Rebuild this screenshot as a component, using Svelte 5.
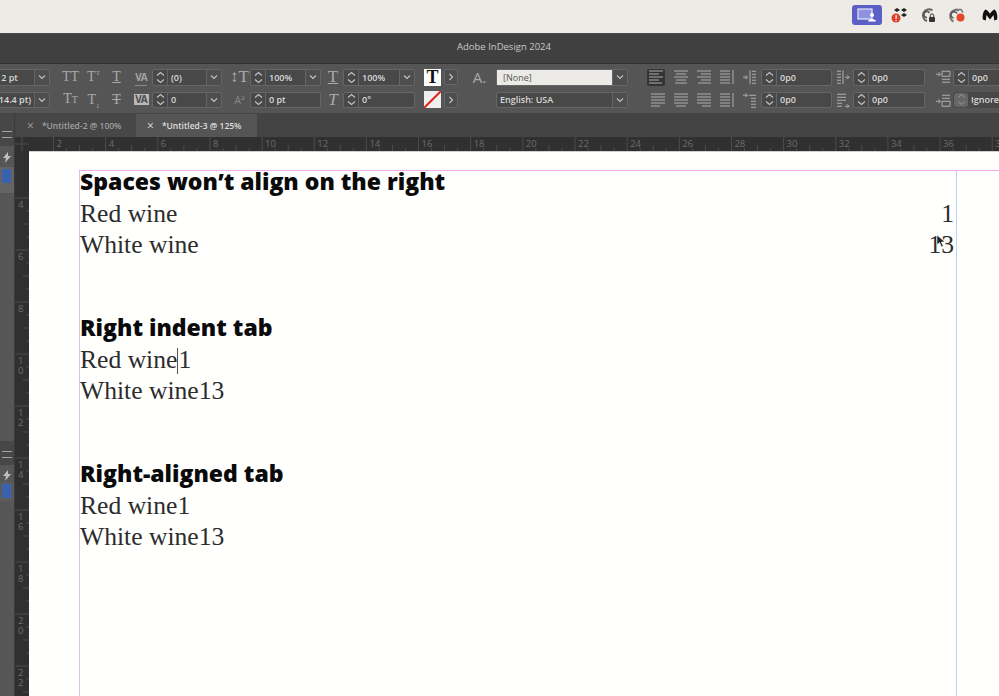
<script>
  const rulerStep = 52.15;
  const hLabels = Array.from({ length: 19 }, (_, i) => ({ n: (i + 1) * 2, x: 53.5 + i * rulerStep - 15 }));
  const vLabels = Array.from({ length: 10 }, (_, i) => ({ n: String((i + 2) * 2), y: 198 - 151 + i * 52 }));
  const minor = [0.25, 0.5, 0.75];

  const groups = [
    { title: 'Spaces won’t align on the right', rows: [['Red wine', '1'], ['White wine', '13']], spaced: true },
    { title: 'Right indent tab', rows: [['Red wine', '1'], ['White wine', '13']], caret: true },
    { title: 'Right-aligned tab', rows: [['Red wine', '1'], ['White wine', '13']] }
  ];

  const aligns = [
    ['M1 2h14M1 5h10M1 8h14M1 11h10M1 14h13', 'M1 2h14M3 5h10M1 8h14M3 11h10M2 14h12', 'M1 2h14M5 5h10M1 8h14M5 11h10M2 14h13', 'M1 2h10M1 5h10M1 8h10M1 11h10M1 14h10M14 1v14'],
    ['M1 2h14M1 5h14M1 8h14M1 11h14M1 14h9', 'M1 2h14M1 5h14M1 8h14M1 11h14M3 14h10', 'M1 2h14M1 5h14M1 8h14M1 11h14M6 14h9', 'M1 2h10M1 5h10M1 8h10M1 11h10M1 14h10M14 1v14']
  ];
</script>

{#snippet combo(text, spin = true, drop = true, light = false)}
  <div class="combo" class:light>
    {#if spin}
      <span class="spin"><svg width="9" height="13" viewBox="0 0 9 13"><path d="M1 4.5 4.5 1.5 8 4.5M1 8.5l3.5 3 3.5-3" /></svg></span>
    {/if}
    <span class="val">{text}</span>
    {#if drop}
      <span class="drop"><svg width="8" height="6" viewBox="0 0 8 6"><path d="M1 1.5 4 4.5 7 1.5" /></svg></span>
    {/if}
  </div>
{/snippet}

{#snippet icon(d, w = 16, h = 16)}
  <svg class="ico" width={w} height={h} viewBox="0 0 {w} {h}"><path {d} /></svg>
{/snippet}

<div class="app">
  <header class="menubar">
    <span class="pill">
      <svg width="20" height="14" viewBox="0 0 20 14">
        <rect x="1" y="1" width="14" height="10" fill="#8f92e0" stroke="#e6e6fa" stroke-width="1.2" />
        <circle cx="15" cy="7" r="2" fill="#fff" />
        <path d="M11 13.500c0-3.500 8-3.500 8 0z" fill="#fff" />
      </svg>
    </span>
    <svg class="tray drop-ic" width="16" height="18" viewBox="0 0 16 18">
      <path d="M6 2 9 4 6 6 3 4zM13 2l3 2-3 2-3-2zM13 7l3 2-3 2-3-2z" fill="#222" />
      <circle cx="5" cy="12" r="4.500" fill="#e0402a" />
      <rect x="4.500" y="9" width="1.200" height="4" fill="#fff" />
      <rect x="4.500" y="14" width="1.200" height="1.200" fill="#fff" />
    </svg>
    <svg class="tray cc" width="14" height="16" viewBox="0 0 14 16">
      <path d="M11.500 3.500A6 6 0 1 0 6 14" fill="none" stroke="#666" stroke-width="2" />
      <path d="M8.500 6A3 3 0 1 0 6 10.500" fill="none" stroke="#555" stroke-width="1.600" />
      <rect x="8" y="10" width="6" height="5" rx="1" fill="#333" />
      <path d="M9.300 10V8.600a1.700 1.700 0 0 1 3.400 0V10" fill="none" stroke="#333" />
    </svg>
    <svg class="tray sync" width="19" height="16" viewBox="0 0 19 16">
      <path d="M12 3.500A6 6 0 1 0 6.500 14.500" fill="none" stroke="#777" stroke-width="2" />
      <path d="M10 6.500A3.200 3.200 0 1 0 6.500 11" fill="none" stroke="#555" stroke-width="1.600" />
      <path d="M8 2.500h6l2 3" fill="none" stroke="#777" stroke-width="1.500" />
      <circle cx="13.500" cy="10.500" r="4" fill="#e5482d" />
    </svg>
    <svg class="tray" width="16" height="15" viewBox="0 0 19 16">
      <path d="M1 14c-.8-5 .5-10 3-12 2 0 4 3 5.500 5C11 5 13 2 15 2c2.500 2 3.800 7 3 12l-3.500 1-.8-6.500L9.500 14 5.300 8.500 4.500 15z" fill="#111" />
    </svg>
  </header>

  <div class="titlebar">Adobe InDesign 2024</div>

  <section class="toolbar">
    <div class="col c1">
      {@render combo('12 pt', false)}
      {@render combo('(14.4 pt)', false)}
    </div>
    <div class="col c2">
      <div class="letters"><span>TT</span><span>T<sup>T</sup></span><span class="under">T</span></div>
      <div class="letters"><span>T<small>T</small></span><span>T<sub>1</sub></span><span class="strike">T</span></div>
    </div>
    <div class="col c3">
      <span class="va"><i>VA</i></span>
      <span class="va boxed"><i>VA</i></span>
    </div>
    <div class="col c4">
      {@render combo('(0)')}
      {@render combo('0')}
    </div>
    <div class="col c5">
      <span class="glyph big">↕T</span>
      <span class="glyph tiny">Aª</span>
    </div>
    <div class="col c6">
      {@render combo('100%')}
      {@render combo('0 pt', true, false)}
    </div>
    <div class="col c7">
      <span class="glyph big under">T</span>
      <span class="glyph big slant">T</span>
    </div>
    <div class="col c8">
      {@render combo('100%')}
      {@render combo('0°', true, false)}
    </div>
    <div class="col c9">
      <div class="swatchrow">
        <span class="swatch">T</span>
        <span class="arrow"><svg width="6" height="8" viewBox="0 0 6 8"><path d="M1.500 1 4.500 4 1.500 7" /></svg></span>
      </div>
      <div class="swatchrow">
        <span class="swatch none"><svg width="17" height="17" viewBox="0 0 17 17"><path d="M0 17 17 0" /></svg></span>
        <span class="arrow"><svg width="6" height="8" viewBox="0 0 6 8"><path d="M1.500 1 4.500 4 1.500 7" /></svg></span>
      </div>
    </div>
    <div class="col c10">
      <span class="glyph style">A.</span>
    </div>
    <div class="col c11">
      {@render combo('[None]', false, true, true)}
      {@render combo('English: USA', false)}
    </div>
    <div class="col c12">
      {#each aligns as row, r}
        <div class="aligns">
          {#each row as d, i}
            <span class="alignbtn" class:on={r === 0 && i === 0}>{@render icon(d)}</span>
          {/each}
        </div>
      {/each}
    </div>
    <div class="col c13">
      {@render icon('M1 8h4M3.500 6 5.500 8 3.500 10M8 1v14M10 2h4M10 5h4M10 8h4M10 11h4M10 14h4')}
      {@render icon('M1 3h4M3.500 1 5.500 3 3.500 5M7 3h7M9 6h5M9 9h5M9 12h5M9 15h5')}
    </div>
    <div class="col c14">
      {@render combo('0p0', true, false)}
      {@render combo('0p0', true, false)}
    </div>
    <div class="col c15">
      {@render icon('M1 2h4M1 5h4M1 8h4M1 11h4M1 14h4M7 1v14M9 8h4M11 6 13 8 11 10')}
      {@render icon('M1 2h9M1 5h9M1 8h9M1 11h5M1 14h5M9 14h4M11 12 13 14 11 16')}
    </div>
    <div class="col c16">
      {@render combo('0p0', true, false)}
      {@render combo('0p0', true, false)}
    </div>
    <div class="col c17">
      {@render icon('M1 5h4M3.500 3 5.500 5 3.500 7M7 2h8v5H7zM7 10h8M7 13h8')}
      {@render icon('M1 9h4M3.500 7 5.500 9 3.500 11M7 3h8M7 6h8M7 9h8v5H7z')}
    </div>
    <div class="col c18">
      {@render combo('0p0', true, false)}
      <div class="combo dim">
        <span class="spin"><svg width="9" height="13" viewBox="0 0 9 13"><path d="M1 4.5 4.5 1.5 8 4.5M1 8.5l3.5 3 3.5-3" /></svg></span>
        <span class="val">Ignore</span>
      </div>
    </div>
  </section>

  <main class="work">
    <aside class="panel">
      <div class="pane head">
        <span class="burger"></span>
      </div>
      <div class="pane top">
        <svg class="bolt" width="10" height="11" viewBox="0 0 10 11"><path d="M6 0 1 6h3L3 11 9 4H6z" /></svg>
        <div class="slot"><span class="blue"></span></div>
      </div>
      <div class="pane head low">
        <span class="burger"></span>
      </div>
      <div class="pane bottom">
        <svg class="bolt" width="10" height="11" viewBox="0 0 10 11"><path d="M6 0 1 6h3L3 11 9 4H6z" /></svg>
        <div class="slot low"><span class="blue"></span></div>
      </div>
    </aside>

    <div class="board">
      <nav class="tabs">
        <div class="tab"><span class="x">×</span>*Untitled-2 @ 100%</div>
        <div class="tab active"><span class="x">×</span>*Untitled-3 @ 125%</div>
      </nav>

      <svg class="hruler" width="984" height="14" viewBox="0 0 984 14">
        <path class="corner" d="M7 0v14M0 7h14" />
        {#each hLabels as l}
          <path d="M{l.x} 0v14" />
          {#each minor as m}
            <path d="M{l.x + m * rulerStep} {m === 0.5 ? 8 : 11}v6" />
          {/each}
          <text x={l.x + 3} y="10">{l.n}</text>
        {/each}
      </svg>

      <div class="lower">
        <svg class="vruler" width="14" height="545" viewBox="0 0 14 545">
          {#each vLabels as l}
            <path d="M0 {l.y}h14" />
            {#each minor as m}
              <path d="M{m === 0.5 ? 8 : 11} {l.y + m * 52}h6" />
            {/each}
            {#each l.n.split('') as ch, i}
              <text x="3" y={l.y + 10 + i * 10}>{ch}</text>
            {/each}
          {/each}
        </svg>

        <div class="page">
          <div class="margin">
            <div class="frame">
              {#each groups as g}
                <div class="group">
                  <h2>{g.title}</h2>
                  {#each g.rows as row, i}
                    <p class:spaced={g.spaced}>
                      <span>{row[0]}{#if g.caret && i === 0}<span class="caret"></span>{/if}</span><span>{row[1]}</span>
                    </p>
                  {/each}
                </div>
              {/each}
              <svg class="pointer" width="11" height="14" viewBox="0 0 11 14"><path d="M1 1v10l2.500-2.500L5.500 13l1.800-.8-2-4.200H9z" /></svg>
            </div>
          </div>
        </div>
      </div>
    </div>
  </main>
</div>

<style>
  :global(body) {
    margin: 0;
    background: #fff;
  }
  .app {
    width: 999px;
    height: 696px;
    display: flex;
    flex-direction: column;
    overflow: hidden;
    font-family: "Open Sans", "Liberation Sans", sans-serif;
  }

  .menubar {
    height: 34px;
    flex: none;
    display: flex;
    align-items: center;
    justify-content: flex-end;
    padding: 0 1px 4px 0;
    box-sizing: border-box;
    background: #eeebe6;
    border-bottom: 1px solid #4a4a4a;
  }
  .pill {
    width: 30px;
    height: 20px;
    border-radius: 3px;
    background: #5c60c6;
    display: flex;
    align-items: center;
    justify-content: center;
    margin-right: 9px;
  }
  .tray {
    flex: none;
  }
  .drop-ic {
    margin-right: 14px;
  }
  .cc {
    margin-right: 12px;
  }
  .sync {
    margin-right: 16px;
  }

  .titlebar {
    height: 30px;
    flex: none;
    background: #404040;
    border-bottom: 1px solid #333;
    color: #c9c9c9;
    font-size: 9.5px;
    line-height: 26px;
    text-align: center;
    padding-left: 9px;
    box-sizing: border-box;
  }

  .toolbar {
    height: 49px;
    flex: none;
    display: flex;
    align-items: flex-start;
    padding-top: 5px;
    box-sizing: border-box;
    background: #555;
    overflow: hidden;
  }
  .col {
    flex: none;
    display: flex;
    flex-direction: column;
    gap: 6px;
    align-items: center;
  }
  .col > :global(*) {
    height: 16.5px;
  }
  .c1 { width: 58px; margin-left: -8px; }
  .c2 { width: 69px; margin-left: 9px; }
  .c3 { width: 14px; margin-left: 6px; }
  .c4 { width: 70px; margin-left: 4px; }
  .c5 { width: 15px; margin-left: 10px; }
  .c6 { width: 71px; margin-left: 3px; }
  .c7 { width: 14px; margin-left: 5px; }
  .c8 { width: 72px; margin-left: 3px; }
  .c9 { width: 34px; margin-left: 9px; }
  .c10 { width: 15px; margin-left: 14px; }
  .c11 { width: 132px; margin-left: 9px; }
  .c12 { width: 91px; margin-left: 19px; }
  .c13 { width: 14px; margin-left: 5px; }
  .c14 { width: 71px; margin-left: 4px; }
  .c15 { width: 13px; margin-left: 5px; }
  .c16 { width: 72px; margin-left: 3px; }
  .c17 { width: 15px; margin-left: 10px; }
  .c18 { width: 77px; margin-left: 3px; }

  .combo {
    width: 100%;
    display: flex;
    align-items: stretch;
    box-sizing: border-box;
    border: 1px solid #666;
    border-radius: 2px;
    background: #484848;
    color: #d8d8d8;
    font-size: 9px;
    font-weight: 600;
  }
  .val {
    flex: 1;
    min-width: 0;
    display: flex;
    align-items: center;
    padding-left: 3px;
    white-space: nowrap;
  }
  .spin {
    width: 14px;
    flex: none;
    display: flex;
    align-items: center;
    justify-content: center;
    border-right: 1px solid #666;
  }
  .drop {
    width: 14px;
    flex: none;
    display: flex;
    align-items: center;
    justify-content: center;
    border-left: 1px solid #666;
    background: #4e4e4e;
  }
  .combo svg path,
  .arrow svg path {
    fill: none;
    stroke: #c4c4c4;
    stroke-width: 1.1;
  }
  .combo.light .val {
    background: #eceae6;
    color: #555;
    padding-left: 6px;
    font-weight: 400;
  }
  .combo.dim {
    border-color: transparent;
  }
  .combo.dim .spin {
    background: #666;
    border-radius: 3px;
    border-right: none;
  }
  .combo.dim svg path {
    stroke: #888;
  }

  .letters {
    width: 100%;
    display: flex;
    align-items: center;
    color: #aaa;
    font-family: "Liberation Serif", serif;
    font-size: 14px;
  }
  .letters span {
    flex: 1;
    text-align: center;
    line-height: 16px;
  }
  .letters sup,
  .letters sub {
    font-size: 7px;
    line-height: 0;
  }
  .letters small {
    font-size: 10px;
  }
  .under {
    text-decoration: underline;
  }
  .strike {
    text-decoration: line-through;
  }

  .va {
    display: flex;
    align-items: center;
    justify-content: center;
    color: #a4a4a4;
    font-size: 10px;
    font-weight: 700;
    letter-spacing: -1px;
    border-bottom: 1px solid #8a8a8a;
    box-sizing: border-box;
  }
  .va i {
    font-style: normal;
  }
  .va.boxed {
    background: #b8b8b8;
    color: #4a4a4a;
    width: 15px;
    height: 11px;
    margin-top: 2px;
    border-bottom: none;
  }

  .glyph {
    display: flex;
    align-items: center;
    justify-content: center;
    color: #aaa;
    font-family: "Liberation Serif", serif;
    white-space: nowrap;
  }
  .glyph.big {
    font-size: 17px;
  }
  .glyph.tiny {
    font-family: "Open Sans", sans-serif;
    font-size: 10px;
    color: #888;
  }
  .glyph.slant {
    font-style: italic;
  }
  .glyph.style {
    font-family: "Open Sans", sans-serif;
    font-size: 15px;
    color: #aaa;
  }

  .swatchrow {
    display: flex;
    align-items: center;
    gap: 3px;
  }
  .swatch {
    width: 17px;
    height: 17px;
    flex: none;
    background: #fff;
    color: #111;
    font-family: "Liberation Serif", serif;
    font-weight: 700;
    font-size: 18px;
    line-height: 17px;
    text-align: center;
  }
  .swatch.none {
    background: #efefef;
  }
  .swatch.none svg {
    display: block;
  }
  .swatch.none path {
    stroke: #e3231b;
    stroke-width: 2;
  }
  .arrow {
    width: 14px;
    height: 16px;
    box-sizing: border-box;
    border: 1px solid #666;
    border-radius: 2px;
    background: #4e4e4e;
    display: flex;
    align-items: center;
    justify-content: center;
  }

  .aligns {
    width: 100%;
    display: flex;
  }
  .alignbtn {
    width: 22.75px;
    display: flex;
    align-items: center;
    justify-content: center;
    box-sizing: border-box;
  }
  .alignbtn.on {
    width: 18px;
    margin-right: 4.75px;
    background: #333;
    border-radius: 2px;
  }
  .ico path {
    fill: none;
    stroke: #aeaeae;
    stroke-width: 1;
  }

  .tabs {
    height: 24px;
    flex: none;
    display: flex;
    align-items: flex-end;
    padding-left: 1px;
    background: #444;
    box-sizing: border-box;
  }
  .tab {
    width: 120px;
    height: 23px;
    display: flex;
    align-items: center;
    box-sizing: border-box;
    padding-left: 11px;
    color: #a0a0a0;
    background: #474747;
    font-size: 8.5px;
    font-weight: 600;
    white-space: nowrap;
  }
  .tab.active {
    width: 121px;
    background: #555;
    color: #dedede;
  }
  .x {
    font-size: 12px;
    font-weight: 400;
    margin-right: 8px;
  }

  .work {
    flex: 1;
    min-height: 0;
    display: flex;
  }
  .panel {
    width: 15px;
    flex: none;
    display: flex;
    flex-direction: column;
    background: #3a3a3a;
  }
  .pane {
    width: 14px;
    background: #565656;
    display: flex;
    flex-direction: column;
    align-items: center;
    box-sizing: border-box;
  }
  .pane.head {
    height: 33px;
    background: #474747;
    justify-content: flex-end;
    padding-bottom: 8px;
  }
  .pane.head.low {
    height: 24px;
    padding-bottom: 7px;
  }
  .pane.top {
    height: 295px;
  }
  .pane.bottom {
    flex: 1;
    padding-top: 5px;
  }
  .burger {
    width: 10px;
    height: 5px;
    border-top: 1px solid #a4a4a4;
    border-bottom: 1px solid #a4a4a4;
    flex: none;
  }
  .bolt {
    margin-top: 6px;
    flex: none;
  }
  .bottom .bolt {
    margin-top: 0;
  }
  .bolt path {
    fill: #c0c0c0;
  }
  .slot {
    width: 100%;
    height: 26px;
    margin-top: 4px;
    padding-top: 2px;
    background: #646464;
    box-sizing: border-box;
    flex: none;
  }
  .slot.low {
    height: 19px;
    margin-top: 1px;
    background: #5c5c5c;
  }
  .blue {
    display: block;
    width: 9px;
    height: 14px;
    margin-left: 2px;
    background: #3862ad;
  }

  .board {
    flex: 1;
    min-width: 0;
    display: flex;
    flex-direction: column;
  }
  .hruler,
  .vruler {
    flex: none;
    display: block;
    background-color: #2f2f2f;
    background-image: repeating-conic-gradient(#2c2c2c 0 25%, #343434 0 50%);
    background-size: 2px 2px;
  }
  .hruler path,
  .vruler path {
    stroke: #4c4c4c;
    stroke-width: 1;
    fill: none;
  }
  .hruler text,
  .vruler text {
    fill: #6c6c6c;
    font-size: 9.5px;
  }
  .lower {
    flex: 1;
    min-height: 0;
    display: flex;
  }
  .page {
    flex: 1;
    min-width: 0;
    background: #fffffd;
    padding: 18px 0 0 50px;
    box-sizing: border-box;
    border-top: 1px solid #cfcfcf;
  }
  .margin {
    height: 100%;
    border-top: 1px solid #f3a9ec;
  }
  .frame {
    position: relative;
    width: 878px;
    height: 100%;
    box-sizing: border-box;
    border-left: 1px solid #dcc0f2;
    border-right: 1px solid #c0d0f8;
    padding-right: 2px;
  }
  .group {
    height: 146px;
  }
  h2 {
    margin: 0 0 5.5px;
    height: 21px;
    font-size: 23px;
    line-height: 21px;
    font-weight: 800;
    color: #0a0a0a;
    white-space: nowrap;
  }
  p {
    margin: 0;
    height: 31.3px;
    line-height: 31.3px;
    font-family: "Liberation Serif", serif;
    font-size: 25.6px;
    color: #2c2c2c;
    display: flex;
    gap: 0;
  }
  p.spaced {
    justify-content: space-between;
  }
  .caret {
    display: inline-block;
    width: 1px;
    height: 26px;
    vertical-align: -6px;
    background: #555;
  }
  .pointer {
    position: absolute;
    left: 856px;
    top: 63px;
  }
  .pointer path {
    fill: #222;
    stroke: #fff;
    stroke-width: 0.6;
  }
</style>
